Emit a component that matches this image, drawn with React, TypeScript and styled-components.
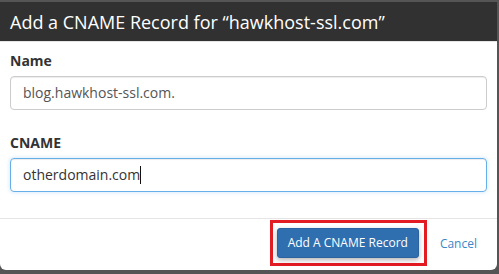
import React from "react";
import styled, { createGlobalStyle } from "styled-components";

const GlobalStyle = createGlobalStyle`
    html, body {
        margin: 0;
        padding: 0;
        background: #555;
        font-family: "Open Sans", "Liberation Sans", Arial, sans-serif;
    }
`;

const Backdrop = styled.div`
    width: 499px;
    height: 274px;
    padding-top: 2px;
    box-sizing: border-box;
    background: #555;
    overflow: hidden;
`;

const Modal = styled.div`
    width: 497px;
    height: 268px;
    background: #fff;
    border-radius: 0 0 6px 6px;
    display: flex;
    flex-direction: column;
    overflow: hidden;
`;

const Header = styled.div`
    height: 39px;
    background: #313131;
    border-bottom: 1px solid #e5e5e5;
    display: flex;
    align-items: center;
    padding: 0 10px;
`;

const Title = styled.h4`
    margin: 0;
    color: #fff;
    font-size: 18px;
    font-weight: 400;
    line-height: 20px;
`;

const Body = styled.div`
    padding: 9px 10px 0 10px;
    height: 177px;
    border-bottom: 1px solid #e5e5e5;
    box-sizing: border-box;
`;

const FormGroup = styled.div<{ $spaced?: boolean }>`
    margin-bottom: ${(p) => (p.$spaced ? "23px" : "0")};
`;

const Label = styled.label`
    display: block;
    font-size: 14px;
    font-weight: 700;
    line-height: 20px;
    color: #333;
    margin-bottom: 5px;
`;

const FakeInput = styled.div<{ $focused?: boolean }>`
    height: 34px;
    box-sizing: border-box;
    border: 1px solid ${(p) => (p.$focused ? "#66afe9" : "#ccc")};
    border-radius: 4px;
    padding: 6px 12px;
    font-size: 14px;
    line-height: 20px;
    color: ${(p) => (p.$focused ? "#333" : "#555")};
    box-shadow: inset 0 1px 1px rgba(0, 0, 0, 0.075)
        ${(p) => (p.$focused ? ", 0 0 4px rgba(102, 175, 233, 0.35)" : "")};
    display: flex;
    align-items: center;
`;

const Caret = styled.span`
    display: inline-block;
    width: 1px;
    height: 18px;
    background: #111;
`;

const Footer = styled.div`
    flex: 1;
    display: flex;
    justify-content: flex-end;
    align-items: center;
    padding: 0 20px 3px 0;
    gap: 13px;
`;

const Highlight = styled.span`
    display: inline-flex;
    border: 3px solid #e31b23;
    padding: 5px 5px 5px 4px;
`;

const PrimaryButton = styled.button`
    font-family: inherit;
    font-size: 12px;
    line-height: 18px;
    color: #fff;
    background: #2f6fb0;
    border: 1px solid #2a63a0;
    border-radius: 3px;
    padding: 5px 10px;
    box-shadow: 0 2px 5px rgba(0, 0, 0, 0.3);
    cursor: pointer;
`;

const CancelLink = styled.a`
    font-size: 12px;
    color: #3a87c8;
    text-decoration: none;
    cursor: pointer;
`;

export default function App(): JSX.Element {
    return (
        <>
            <GlobalStyle />
            <Backdrop>
                <Modal>
                    <Header>
                        <Title>Add a CNAME Record for “hawkhost-ssl.com”</Title>
                    </Header>
                    <Body>
                        <FormGroup $spaced>
                            <Label>Name</Label>
                            <FakeInput>blog.hawkhost-ssl.com.</FakeInput>
                        </FormGroup>
                        <FormGroup>
                            <Label>CNAME</Label>
                            <FakeInput $focused>
                                otherdomain.com
                                <Caret />
                            </FakeInput>
                        </FormGroup>
                    </Body>
                    <Footer>
                        <Highlight>
                            <PrimaryButton>Add A CNAME Record</PrimaryButton>
                        </Highlight>
                        <CancelLink>Cancel</CancelLink>
                    </Footer>
                </Modal>
            </Backdrop>
        </>
    );
}
